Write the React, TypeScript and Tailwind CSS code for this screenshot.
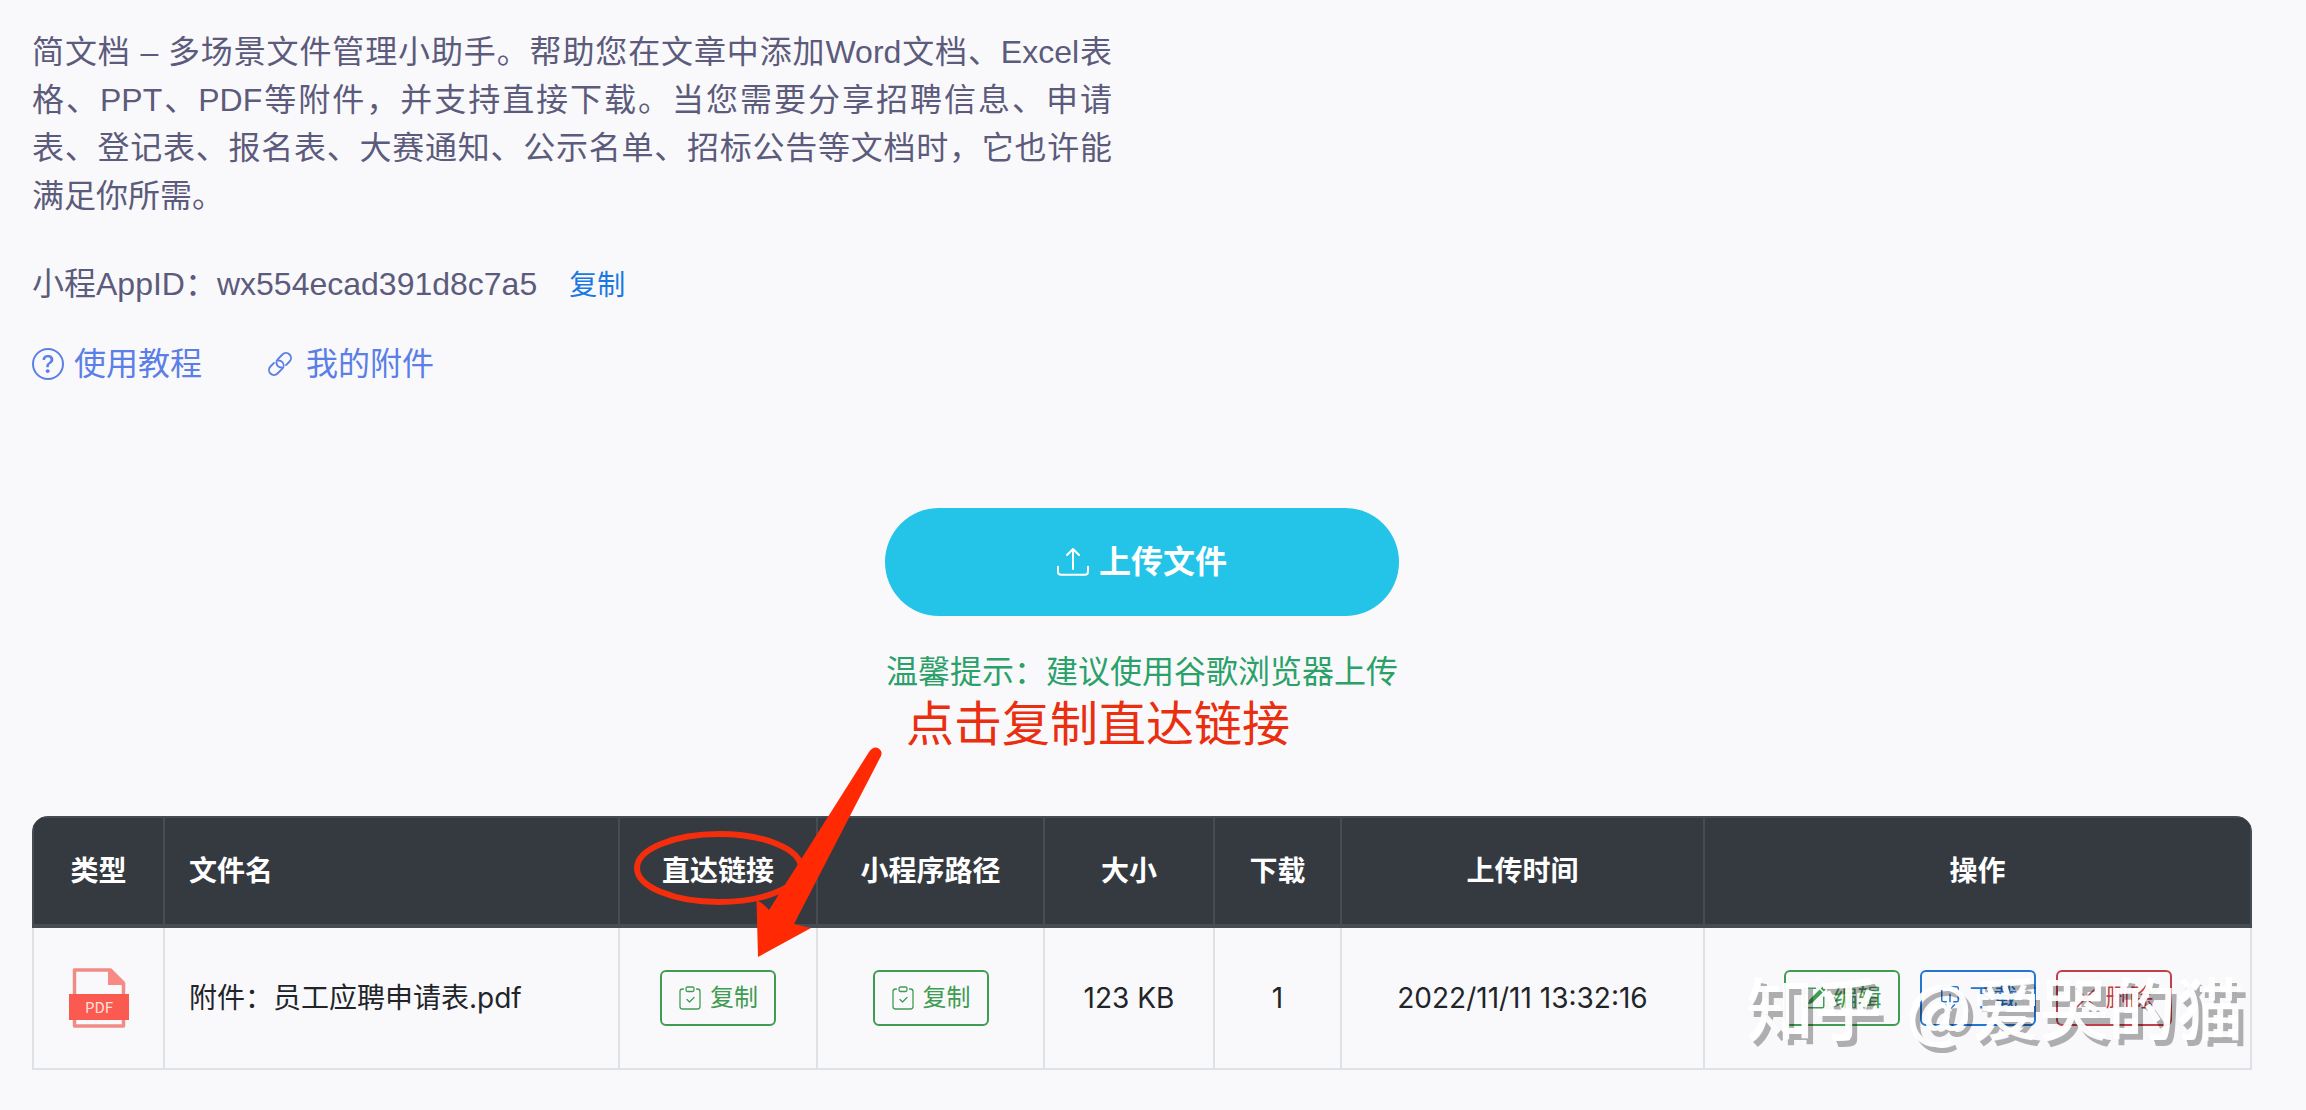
import type { ReactNode } from 'react'
import { BsBoxArrowDown, BsPencilSquare, BsQuestionCircle, BsUpload } from 'react-icons/bs'

const columns = [
  { title: '类型', width: 'w-[131px]' },
  { title: '文件名', width: '' },
  { title: '直达链接', width: 'w-[198px]' },
  { title: '小程序路径', width: 'w-[227px]' },
  { title: '大小', width: 'w-[170px]' },
  { title: '下载', width: 'w-[127px]' },
  { title: '上传时间', width: 'w-[363px]' },
  { title: '操作', width: 'w-[547px]' },
]

const files = [
  { name: '附件：员工应聘申请表.pdf', size: '123 KB', downloads: 1, time: '2022/11/11 13:32:16' },
]

const colors = {
  green: 'border-[#3f9c50] text-[#3f9c50]',
  blue: 'border-[#2376d2] text-[#2376d2]',
  red: 'border-[#bf4048] text-[#bf4048]',
}

function ActionButton({ color, icon, children }: { color: keyof typeof colors, icon: ReactNode, children: ReactNode }) {
  return (
    <button
      type="button"
      className={`inline-flex h-14 items-center gap-2 rounded-md border-2 px-4 text-2xl ${colors[color]}`}
    >
      {icon}
      {children}
    </button>
  )
}

function ClipboardIcon() {
  return (
    <svg viewBox="0 0 24 24" className="size-6" fill="none" stroke="currentColor" strokeWidth="1.300" strokeLinecap="round" strokeLinejoin="round" aria-hidden="true">
      <path d="M5.500 3H4.500A2.500 2.500 0 0 0 2 5.500V20.500A2.500 2.500 0 0 0 4.500 23H19.500A2.500 2.500 0 0 0 22 20.500V5.500A2.500 2.500 0 0 0 19.500 3H18.500" />
      <rect x="8" y="1" width="8" height="4.500" rx="1.500" />
      <path d="M9 13.500l2.500 2.500 4.500-4.500" />
    </svg>
  )
}

function CloseIcon() {
  return (
    <svg viewBox="0 0 24 24" className="size-6" fill="none" stroke="currentColor" strokeWidth="1.500" strokeLinecap="round" aria-hidden="true">
      <path d="M3 3l18 18M21 3L3 21" />
    </svg>
  )
}

function ChainIcon() {
  return (
    <svg viewBox="-14 -14 28 28" className="size-7" fill="none" stroke="currentColor" strokeWidth="1.900" strokeLinecap="round" aria-hidden="true">
      <g transform="rotate(-45)">
        <path d="M3.500 5H8.500a5 5 0 0 0 0-10H2A5 5 0 0 0-3 0A5 5 0 0 0-1.500 3.500" />
        <path d="M-3.500-5H-8.500a5 5 0 0 0 0 10H-2A5 5 0 0 0 3 0A5 5 0 0 0 1.500-3.500" />
      </g>
    </svg>
  )
}

function PdfIcon() {
  return (
    <svg viewBox="0 0 60 60" className="mx-auto size-15" role="img" aria-label="PDF">
      <path d="M5.500 27V2h36L54.500 15V27M5.500 51v7h49v-7" fill="none" stroke="#f08c88" strokeWidth="3.500" strokeLinejoin="round" />
      <path d="M39 1h3l14 14v2H39z" fill="#f88a86" />
      <rect y="26" width="60" height="26" fill="#fb5a50" />
      <text x="30" y="45" textAnchor="middle" fontSize="15" fill="#fde0de" className="font-['Noto_Sans_CJK_SC',sans-serif]">PDF</text>
    </svg>
  )
}

export default function App() {
  return (
    <main className="min-h-screen bg-[#f9f9fc] pt-7 pr-[54px] pb-10 pl-8 font-['Inter','Noto_Sans_CJK_SC',sans-serif] text-[#212529]">
      <div className="font-['Liberation_Sans','Noto_Sans_CJK_SC',sans-serif] text-[32px] leading-12 text-[#5c5b7b]">
        <p className="max-w-[1080px] text-justify">
          简文档 – 多场景文件管理小助手。帮助您在文章中添加Word文档、Excel表格、PPT、PDF等附件，并支持直接下载。当您需要分享招聘信息、申请表、登记表、报名表、大赛通知、公示名单、招标公告等文档时，它也许能满足你所需。
        </p>

        <div className="mt-10 flex h-12 items-baseline gap-8">
          <span>小程AppID：wx554ecad391d8c7a5</span>
          <button type="button" className="text-[28px] text-[#1a78e0]">复制</button>
        </div>
      </div>

      <nav className="mt-8 flex gap-16 text-[32px] leading-12 text-[#5b7fe6]">
        <a href="#help" className="flex items-center gap-[10px]">
          <BsQuestionCircle />
          使用教程
        </a>
        <a href="#files" className="flex items-center gap-3">
          <ChainIcon />
          我的附件
        </a>
      </nav>

      <section className="mt-30 flex flex-col items-center">
        <button type="button" className="flex h-27 w-[514px] items-center justify-center gap-[10px] rounded-full bg-[#23c4e8] text-[32px] font-bold text-white">
          <BsUpload />
          上传文件
        </button>
        <div className="relative mt-8 text-[32px] leading-12 text-[#2ba169]">
          温馨提示：建议使用谷歌浏览器上传
          <div className="absolute top-11 left-5 text-5xl leading-16 whitespace-nowrap text-[#ea2f10]">点击复制直达链接</div>
        </div>
      </section>

      <div className="relative mt-30">
        <div className="overflow-hidden rounded-t-2xl">
          <table className="w-full table-fixed border-collapse text-center text-[28px]">
            <colgroup>
              {columns.map((c) => <col key={c.title} className={c.width} />)}
            </colgroup>
            <thead className="bg-[#353a41] text-white">
              <tr className="h-[109px]">
                {columns.map((c) =>
                  <th
                    key={c.title}
                    className={`border-2 border-b-4 border-[#464c54] px-6 font-bold ${c.title === '文件名' ? 'text-left' : ''}`}
                  >
                    {c.title}
                  </th>
                )}
              </tr>
            </thead>
            <tbody>
              {files.map((f) =>
                <tr key={f.name} className="h-[143px] *:border-2 *:border-[#dee2e6]">
                  <td><PdfIcon /></td>
                  <td className="px-6 text-left">{f.name}</td>
                  <td>
                    <ActionButton color="green" icon={<ClipboardIcon />}>复制</ActionButton>
                  </td>
                  <td>
                    <ActionButton color="green" icon={<ClipboardIcon />}>复制</ActionButton>
                  </td>
                  <td>{f.size}</td>
                  <td>{f.downloads}</td>
                  <td>{f.time}</td>
                  <td>
                    <div className="flex justify-center gap-5">
                      <ActionButton color="green" icon={<BsPencilSquare />}>编辑</ActionButton>
                      <ActionButton color="blue" icon={<BsBoxArrowDown />}>下载</ActionButton>
                      <ActionButton color="red" icon={<CloseIcon />}>删除</ActionButton>
                    </div>
                  </td>
                </tr>
              )}
            </tbody>
          </table>
        </div>

        {/* hint arrow pointing at the direct link column */}
        <svg viewBox="630 740 260 220" className="pointer-events-none absolute -top-19 left-[598px] h-55 w-65" aria-hidden="true">
          <ellipse cx="719" cy="868" rx="82" ry="34" fill="none" stroke="#f42d0c" strokeWidth="6" />
          <path d="M758 957L756.500 900Q763 903 769 910L869 752Q873 746 878 748Q883 751 881 756L794 924L811 928Z" fill="#ff2a04" />
        </svg>

        <div className="pointer-events-none absolute right-2 bottom-5 flex gap-6 font-['Noto_Sans_CJK_SC',sans-serif] text-[68px] leading-22 font-medium text-white/95 [text-shadow:5px_6px_0_rgb(0_0_0/0.3)]">
          <span>知乎</span>
          <span>@爱哭的猫</span>
        </div>
      </div>
    </main>
  )
}
